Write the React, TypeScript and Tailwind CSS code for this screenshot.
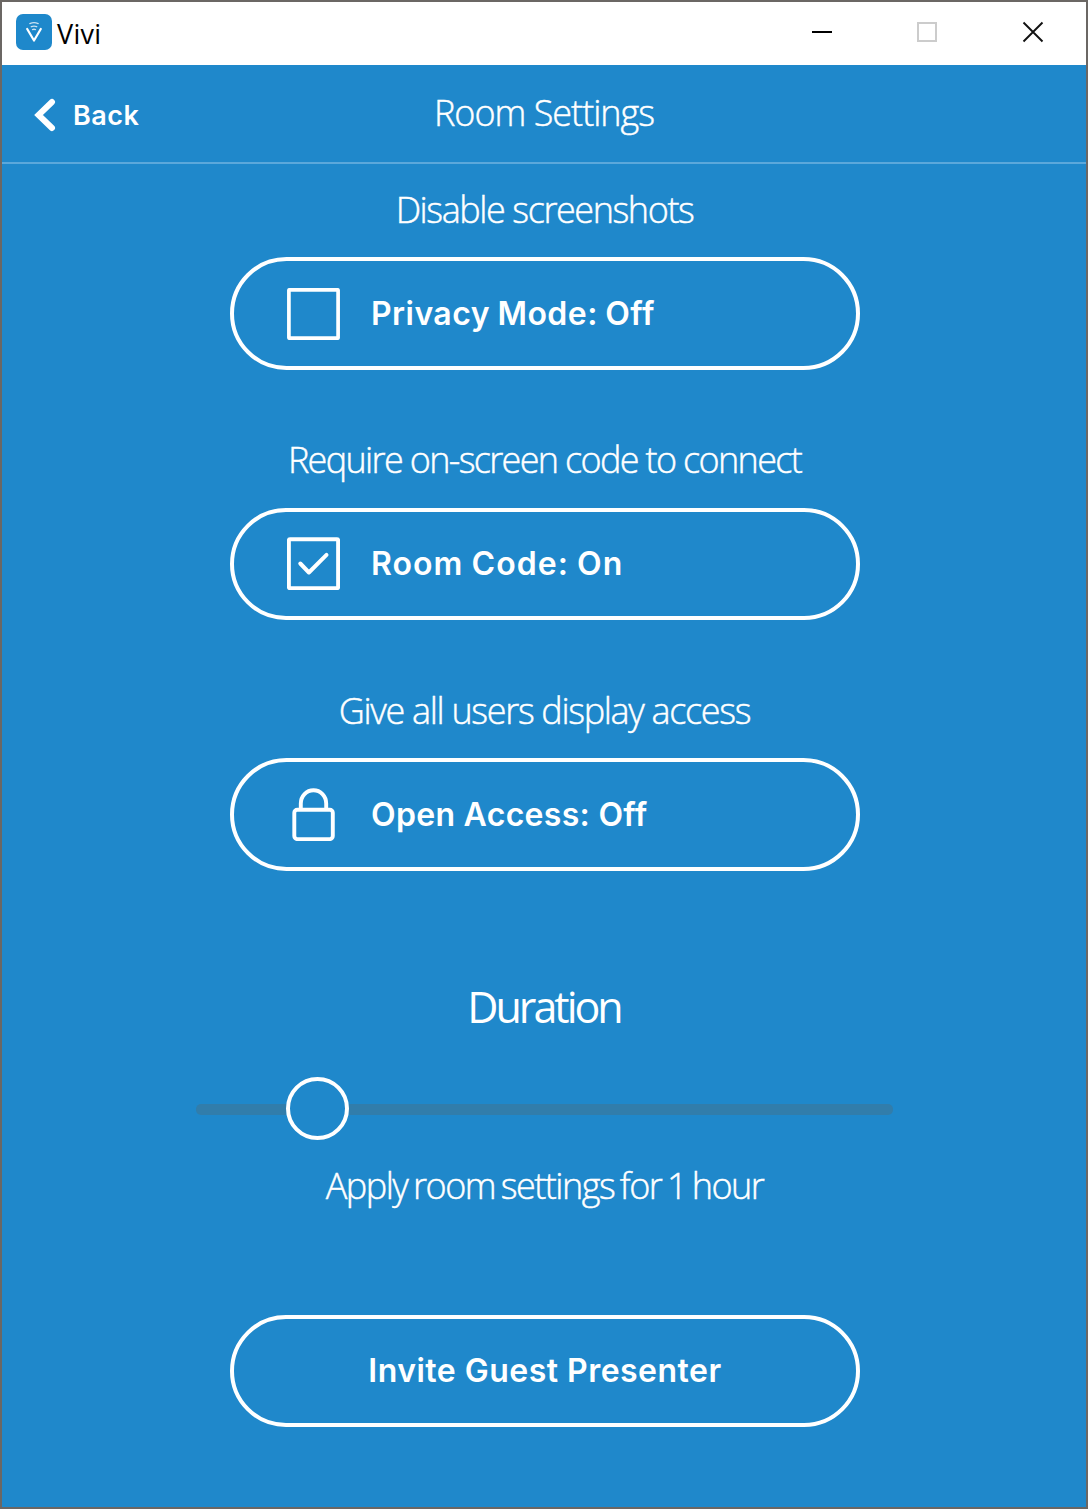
import type { ReactNode } from "react";

function TitleBar() {
  return (
    <div className="flex h-[63px] items-start bg-white text-black">
      <svg className="ml-[14px] mt-3 size-9" viewBox="0 0 36 36" fill="none">
        <rect width="36" height="36" rx="7" fill="#1e88cb" />
        <path d="M11.2 15 18 26.5 24.8 15" stroke="#fff" strokeWidth="2.2" strokeLinecap="round" strokeLinejoin="round" />
        <path d="M13.8 9.6q4.2-1.8 8.4 0M15.3 12.7q2.7-1.2 5.4 0M16.5 15.6q1.5-.7 3 0" stroke="#c8e1f2" strokeWidth="1.3" strokeLinecap="round" />
      </svg>
      <span className="ml-[5px] mt-[13px] font-['Open_Sans'] text-[27px] leading-[38px] tracking-[0.3px]">Vivi</span>
      <div className="ml-auto mr-[43px] mt-5 flex">
        <svg className="mr-[85px] size-5" viewBox="0 0 20 20"><path d="M0 10h20" stroke="#000" strokeWidth="2" /></svg>
        <svg className="mr-[86px] size-5" viewBox="0 0 20 20" fill="none"><path d="M1 1h18v18H1z" stroke="#ccc" strokeWidth="2" /></svg>
        <svg className="size-5 overflow-visible" viewBox="0 0 20 20"><path d="m.5.5 19 19m0-19-19 19" stroke="#111" strokeWidth="1.9" /></svg>
      </div>
    </div>
  );
}

function EmptyBox() {
  return (
    <svg className="h-[52px] w-[53px]" viewBox="0 0 53 52" fill="none">
      <rect x="1.9" y="1.8" width="49.2" height="48.4" rx=".5" stroke="#fff" strokeWidth="3.7" />
    </svg>
  );
}

function CheckedBox() {
  return (
    <svg className="-mt-0.5 h-[53px] w-[53px]" viewBox="0 0 53 53" fill="none" stroke="#fff">
      <rect x="1.9" y="2.2" width="49.2" height="49" rx="1" strokeWidth="3.9" />
      <path d="m13.3 26.5 8.6 9 17.6-17.6" strokeWidth="4" strokeLinecap="round" strokeLinejoin="round" />
    </svg>
  );
}

function Lock() {
  return (
    <svg className="h-[53px] w-[53px]" viewBox="0 0 53 53" fill="none" stroke="#fff" strokeWidth="3.9">
      <rect x="7.3" y="21.8" width="38.5" height="29.3" rx="3" />
      <path d="M13.8 21.5v-6a12.7 13.2 0 0 1 25.4 0v6" />
    </svg>
  );
}

function Caption({ className, children }: { className: string; children: ReactNode }) {
  return <p className={`text-center font-['Open_Sans'] text-[36px] font-light leading-[50px] whitespace-nowrap [-webkit-text-stroke:0.45px_white] ${className}`}>{children}</p>;
}

function Pill({ className, icon, children }: { className: string; icon?: ReactNode; children: ReactNode }) {
  return (
    <button className={`flex w-[630px] items-center rounded-full border-4 border-white font-['Inter'] text-[32px] font-[580] leading-10 whitespace-nowrap [font-feature-settings:'calt'_0] [font-variant-ligatures:none] ${icon ? "gap-[31px] pl-[53px]" : "justify-center"} ${className}`}>
      {icon}
      <span>{children}</span>
    </button>
  );
}

export default function App() {
  return (
    <div className="flex h-[1509px] w-[1088px] flex-col border-2 border-[#6b6764] bg-[#1f88cb] text-white">
      <TitleBar />
      <header className="grid h-[99px] grid-cols-3 items-start border-b-2 border-[#5ba8db]">
        <button className="mt-[34px] flex items-center pl-[32px] font-['Inter'] text-[27px] font-[580] leading-[34px] tracking-[0.5px]">
          <svg className="-mt-0.5 mr-[17px] h-[34px] w-[22px]" viewBox="0 0 22 34" fill="none">
            <path d="M18 4 4.5 17 18 30" stroke="#fff" strokeWidth="6" strokeLinecap="round" />
          </svg>
          Back
        </button>
        <h1 className="mt-[23px] text-center font-['Open_Sans'] text-[36px] font-light leading-[50px] tracking-[-1px] whitespace-nowrap [-webkit-text-stroke:0.45px_white]">Room Settings</h1>
      </header>
      <main className="flex flex-col items-center pr-px pl-[3px]">
        <Caption className="mt-[21px] mr-px tracking-[-1.42px]">Disable screenshots</Caption>
        <Pill className="mt-[22px] h-[113px] tracking-[0.45px] [word-spacing:-1px]" icon={<EmptyBox />}>Privacy Mode: Off</Pill>
        <Caption className="mt-[65px] mr-px tracking-[-1.66px]">Require on-screen code to connect</Caption>
        <Pill className="mt-[23px] h-[112px] tracking-[1.05px] [word-spacing:-1px]" icon={<CheckedBox />}>Room Code: On</Pill>
        <Caption className="mt-[66px] mr-px tracking-[-1.33px]">Give all users display access</Caption>
        <Pill className="mt-[22px] h-[113px] tracking-[0.3px]" icon={<Lock />}>Open Access: Off</Pill>
        <h2 className="mr-[2px] mt-[106px] font-['Open_Sans'] text-[43px] leading-[60px] tracking-[-3px]">Duration</h2>
        <div className="mr-[2px] mt-[40px] flex h-[63px] w-[697px] items-center">
          <div className="mt-0.5 h-[11px] w-[90px] rounded-l-[5px] bg-[#317dab]" />
          <div className="size-[63px] rounded-full border-4 border-white" />
          <div className="mt-0.5 h-[11px] flex-1 rounded-r-[5px] bg-[#317dab]" />
        </div>
        <Caption className="mr-px mt-[21px] tracking-[-1.5px] [word-spacing:-2.2px]">Apply room settings for 1 hour</Caption>
        <Pill className="mt-[104px] h-[112px] tracking-[0.48px]">Invite Guest Presenter</Pill>
      </main>
    </div>
  );
}
